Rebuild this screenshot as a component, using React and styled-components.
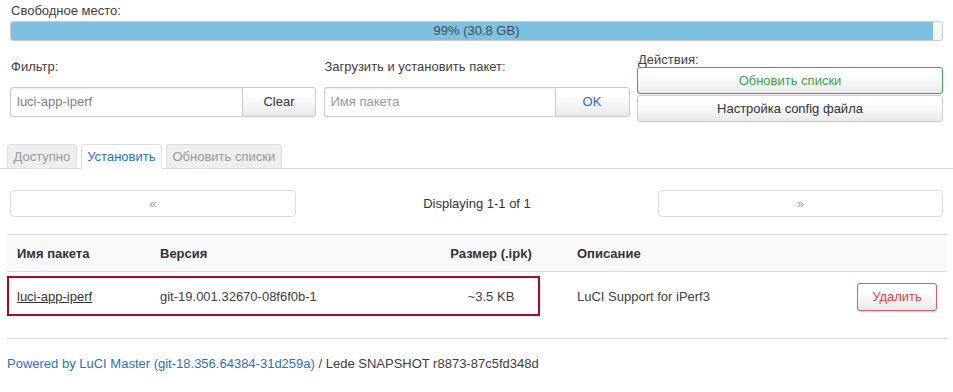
import React from 'react'
import styled, { createGlobalStyle } from 'styled-components'

const GlobalStyle = createGlobalStyle`
  html, body {
    margin: 0;
    padding: 0;
    background: #fff;
  }
  body {
    font-family: "Liberation Sans", Arial, sans-serif;
    font-size: 13px;
    color: #404040;
  }
`

const Page = styled.div`
  width: 953px;
  padding-top: 2px;
`

const Section = styled.div`
  padding: 0 ${props => props.right || 10}px 0 ${props => props.left || 10}px;
`

const Label = styled.div`
  line-height: ${props => props.lh || 18}px;
  margin-top: ${props => props.mt || 0}px;
  padding-left: 1px;
`

const Progress = styled.div`
  position: relative;
  margin-top: 1px;
  height: 18px;
  border: 1px solid #ccc;
  border-radius: 3px;
  background: #f7f7f7;
  overflow: hidden;
`

const ProgressFill = styled.div`
  height: 100%;
  background: #7bc1e2;
`

const ProgressText = styled.div`
  position: absolute;
  inset: 0;
  text-align: center;
  line-height: 18px;
  color: #4a4a4a;
`

const Controls = styled.div`
  display: grid;
  grid-template-columns: 306px 306px 306px;
  column-gap: 7.5px;
  margin-top: 11px;
`

const Column = styled.div`
  display: flex;
  flex-direction: column;
`

const InputGroup = styled.div`
  display: flex;
  height: 30px;
  margin-top: 11px;
`

const TextInput = styled.div`
  flex: 1;
  border: 1px solid #ccc;
  border-right: none;
  border-radius: 3px 0 0 3px;
  box-shadow: inset 0 1px 2px rgba(0, 0, 0, 0.08);
  padding-left: 6px;
  line-height: 28px;
  color: ${props => (props.placeholder ? '#999' : '#808080')};
`

const Button = styled.div`
  box-sizing: border-box;
  height: ${props => props.h || 30}px;
  width: ${props => (props.w ? props.w + 'px' : 'auto')};
  border: 1px solid ${props => props.border || '#ccc'};
  border-radius: ${props => props.radius || '3px'};
  background-image: linear-gradient(#ffffff, #ffffff 25%, #e9e9e9);
  box-shadow: 0 1px 1px rgba(0, 0, 0, 0.06);
  color: ${props => props.color || '#333'};
  text-align: center;
  line-height: ${props => (props.h || 30) - 2}px;
  margin-top: ${props => props.mt || 0}px;
  font-size: 13px;
`

const Tabs = styled.div`
  display: flex;
  gap: 4px;
  margin-top: 22px;
  padding-left: 7px;
  border-bottom: 1px solid #ddd;
  height: 24px;
`

const Tab = styled.div`
  box-sizing: border-box;
  padding: 0 5.5px;
  line-height: 24px;
  border: 1px solid #ddd;
  border-bottom: ${props => (props.active ? '1px solid #fff' : 'none')};
  border-radius: 4px 4px 0 0;
  background: ${props => (props.active ? '#fff' : '#eee')};
  color: ${props => (props.active ? '#1f6fe0' : '#999')};
  margin-bottom: ${props => (props.active ? '-1px' : '0')};
  height: ${props => (props.active ? '25px' : '24px')};
`

const Pager = styled.div`
  display: grid;
  grid-template-columns: 286px 1fr 285px;
  align-items: center;
  margin-top: 21px;
`

const PagerButton = styled.div`
  height: 27px;
  box-sizing: border-box;
  border: 1px solid #ddd;
  border-radius: 4px;
  text-align: center;
  line-height: 25px;
  color: #999;
`

const PagerInfo = styled.div`
  text-align: center;
  color: #333;
`

const Table = styled.div`
  margin: 17px 6px 0 7px;
  border-top: 1px solid #ddd;
`

const TableRow = styled.div`
  position: relative;
  display: grid;
  grid-template-columns: 143px 265px 152px 280px 1fr;
  align-items: center;
  height: ${props => props.h}px;
  background: ${props => props.bg || 'transparent'};
  border-bottom: 1px solid ${props => props.line || '#e2e2e2'};
  font-weight: ${props => (props.head ? 'bold' : 'normal')};
  color: ${props => (props.head ? '#333' : '#404040')};
`

const Cell = styled.div`
  padding: 0 10px;
  text-align: ${props => props.align || 'left'};
  display: flex;
  justify-content: ${props => props.justify || (props.align === 'center' ? 'center' : 'flex-start')};
`

const PackageLink = styled.span`
  color: #333;
  text-decoration: underline;
`

const Highlight = styled.div`
  position: absolute;
  left: 0;
  top: 4px;
  width: 533px;
  height: 40px;
  box-sizing: border-box;
  border: 2px solid #b80030;
  pointer-events: none;
`

const Footer = styled.div`
  margin: 16px 6px 0 7px;
  border-top: 1px solid #e2e2e2;
  padding-top: 16px;
  line-height: 18px;
  color: #404040;
`

const FooterLink = styled.span`
  color: #2a6fd3;
`

const App = () => {
  return (
    <Page>
      <GlobalStyle />
      <Section>
        <Label>Свободное место:</Label>
        <Progress>
          <ProgressFill style={{ width: '99%' }} />
          <ProgressText>99% (30.8 GB)</ProgressText>
        </Progress>
        <Controls>
          <Column>
            <Label mt={6}>Фильтр:</Label>
            <InputGroup>
              <TextInput>luci-app-iperf</TextInput>
              <Button w={74} radius="0 3px 3px 0">Clear</Button>
            </InputGroup>
          </Column>
          <Column>
            <Label mt={6}>Загрузить и установить пакет:</Label>
            <InputGroup>
              <TextInput placeholder>Имя пакета</TextInput>
              <Button w={75} radius="0 3px 3px 0" color="#1f6fd6">OK</Button>
            </InputGroup>
          </Column>
          <Column>
            <Label lh={15}>Действия:</Label>
            <Button h={27} border="#2eb04a" color="#3da43d">Обновить списки</Button>
            <Button h={27} mt={1}>Настройка config файла</Button>
          </Column>
        </Controls>
      </Section>

      <Tabs>
        <Tab>Доступно</Tab>
        <Tab active>Установить</Tab>
        <Tab>Обновить списки</Tab>
      </Tabs>

      <Section>
        <Pager>
          <PagerButton>«</PagerButton>
          <PagerInfo>Displaying 1-1 of 1</PagerInfo>
          <PagerButton>»</PagerButton>
        </Pager>
      </Section>

      <Table>
        <TableRow head h={36} bg="#f9f9f9" line="#ddd">
          <Cell>Имя пакета</Cell>
          <Cell>Версия</Cell>
          <Cell align="center">Размер (.ipk)</Cell>
          <Cell>Описание</Cell>
          <Cell />
        </TableRow>
        <TableRow h={49} line="transparent">
          <Cell><PackageLink>luci-app-iperf</PackageLink></Cell>
          <Cell>git-19.001.32670-08f6f0b-1</Cell>
          <Cell align="center">~3.5 KB</Cell>
          <Cell>LuCI Support for iPerf3</Cell>
          <Cell justify="flex-end">
            <Button h={28} w={80} border="#ee5457" color="#e8413f">Удалить</Button>
          </Cell>
          <Highlight />
        </TableRow>
      </Table>

      <Footer>
        <FooterLink>Powered by LuCI Master (git-18.356.64384-31d259a)</FooterLink> / Lede SNAPSHOT r8873-87c5fd348d
      </Footer>
    </Page>
  )
}

export default App
